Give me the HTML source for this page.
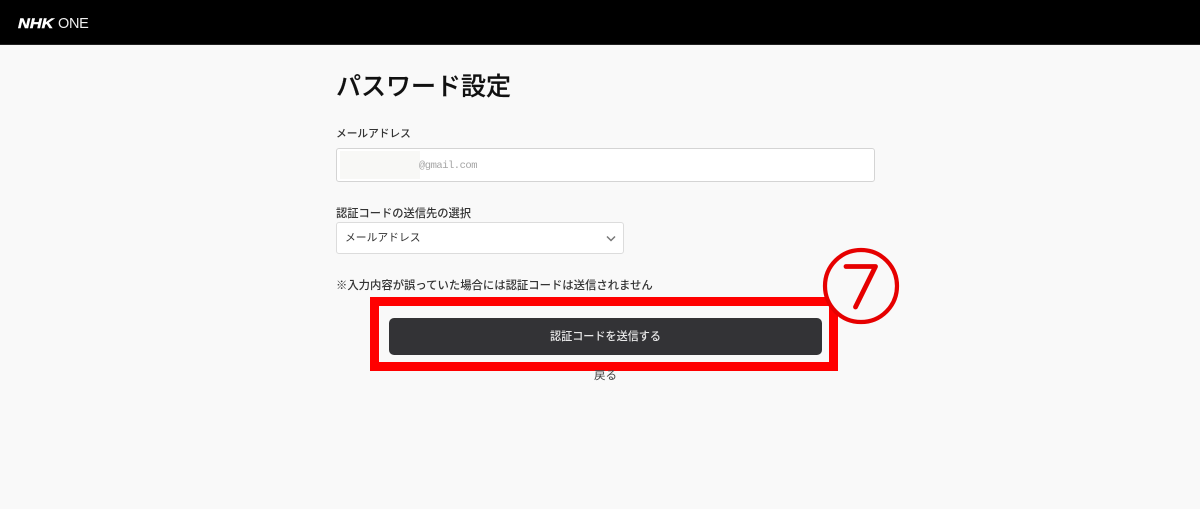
<!DOCTYPE html>
<html lang="ja"><head><meta charset="utf-8"><style>
*{box-sizing:border-box}
html,body{margin:0;padding:0}
body{width:1200px;height:509px;overflow:hidden;position:relative;background:#f9f9f9;font-family:"Liberation Sans","Noto Sans CJK JP",sans-serif;color:#222}
.a{position:absolute;white-space:nowrap}
.t{filter:blur(.3px)}
</style></head><body>
<div class="a" style="left:0;top:0;width:1200px;height:45px;background:#000;border-bottom:1px solid #222"></div>
<div class="a t" style="left:18px;top:15px;font-size:14px;line-height:17px;font-weight:700;font-style:italic;color:#fff;transform-origin:0 50%;transform:scaleX(1.17);-webkit-text-stroke:.4px #fff">NHK</div>
<div class="a t" style="left:58px;top:16px;font-size:14.5px;line-height:17px;color:#eee;letter-spacing:-.3px">ONE</div>

<div class="a t" style="left:336px;top:69px;font-size:25px;line-height:36px;font-weight:500;color:#111;-webkit-text-stroke:.2px #111">パスワード設定</div>

<div class="a t" style="left:336px;top:126px;font-size:10.7px;line-height:16px;font-weight:500;color:#333">メールアドレス</div>
<div class="a" style="left:336px;top:148px;width:539px;height:34px;background:#fff;border:1px solid #d4d4d4;border-radius:3px"></div>
<div class="a" style="left:340px;top:151px;width:80px;height:28px;background:#f8f8f6"></div>
<div class="a t" style="left:419px;top:158px;font-family:'Liberation Mono',monospace;font-size:10.5px;line-height:16px;color:#a5a5a5;letter-spacing:-.5px">@gmail.com</div>

<div class="a t" style="left:336px;top:206px;font-size:11.25px;line-height:16px;font-weight:500;color:#333">認証コードの送信先の選択</div>
<div class="a" style="left:336px;top:222px;width:288px;height:32px;background:#fff;border:1px solid #dcdcdc;border-radius:3px"></div>
<div class="a t" style="left:345px;top:230px;font-size:10.8px;line-height:16px;color:#333">メールアドレス</div>
<svg class="a" style="left:604px;top:234px" width="14" height="10" viewBox="0 0 14 10"><path d="M3 2.5L7 6.5L11 2.5" fill="none" stroke="#777" stroke-width="1.5"/></svg>

<div class="a t" style="left:336px;top:278px;font-size:11.35px;line-height:16px;font-weight:500;color:#333">※入力内容が誤っていた場合には認証コードは送信されません</div>

<div class="a" style="left:370px;top:297px;width:468px;height:74px;border:9.5px solid #f00"></div>
<div class="a" style="left:389px;top:318px;width:433px;height:37px;background:#333336;border-radius:5px"></div>
<div class="a t" style="left:389px;top:329px;width:433px;text-align:center;font-size:11.1px;line-height:17px;font-weight:500;color:#e8e8e8">認証コードを送信する</div>
<div class="a t" style="left:594px;top:368px;font-size:11.5px;line-height:16px;color:#444">戻る</div>

<svg class="a" style="left:820px;top:245px" width="82" height="82" viewBox="0 0 82 82"><circle cx="41" cy="41" r="36" fill="#f9f9f9" stroke="#e60000" stroke-width="4.2"/><path d="M26 21.5H55.5L35.5 62" fill="none" stroke="#e60000" stroke-width="4.8" stroke-linecap="round" stroke-linejoin="round"/></svg>
</body></html>
